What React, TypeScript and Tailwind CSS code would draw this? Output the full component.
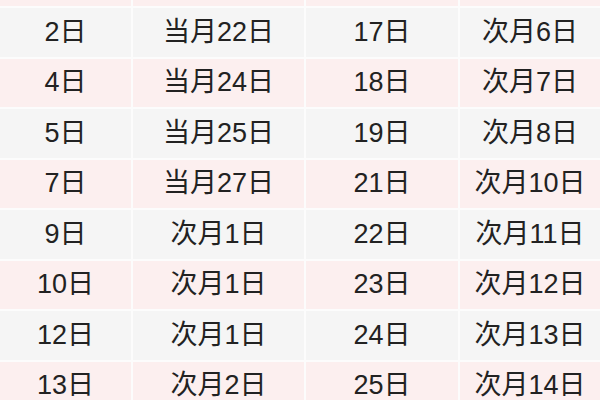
import React from 'react';

const rows: [string, string, string, string][] = [
  ['2日', '当月22日', '17日', '次月6日'],
  ['4日', '当月24日', '18日', '次月7日'],
  ['5日', '当月25日', '19日', '次月8日'],
  ['7日', '当月27日', '21日', '次月10日'],
  ['9日', '次月1日', '22日', '次月11日'],
  ['10日', '次月1日', '23日', '次月12日'],
  ['12日', '次月1日', '24日', '次月13日'],
  ['13日', '次月2日', '25日', '次月14日'],
];

const Row = ({ cells, pink, h }: { cells: string[]; pink: boolean; h: string }) => (
  <div className={`grid grid-cols-[131px_171px_152px_1fr] gap-x-[2px] ${h}`}>
    {cells.map((c, i) => (
      <div
        key={i}
        className={`flex items-center justify-center ${pink ? 'bg-[#fcefef]' : 'bg-[#f5f5f5]'}`}
      >
        {c}
      </div>
    ))}
  </div>
);

export default function App() {
  return (
    <div
      className="w-[600px] h-[400px] overflow-hidden bg-[#fcfcfc] flex flex-col gap-y-[2px] text-[27px] text-[#222222] leading-none"
      style={{ fontFamily: '"Liberation Sans", "Noto Sans CJK SC", sans-serif' }}
    >
      <Row cells={['', '', '', '']} pink h="h-[6px] shrink-0" />
      {rows.map((r, i) => (
        <Row key={i} cells={r} pink={i % 2 === 1} h="h-[48.5px] shrink-0" />
      ))}
    </div>
  );
}
